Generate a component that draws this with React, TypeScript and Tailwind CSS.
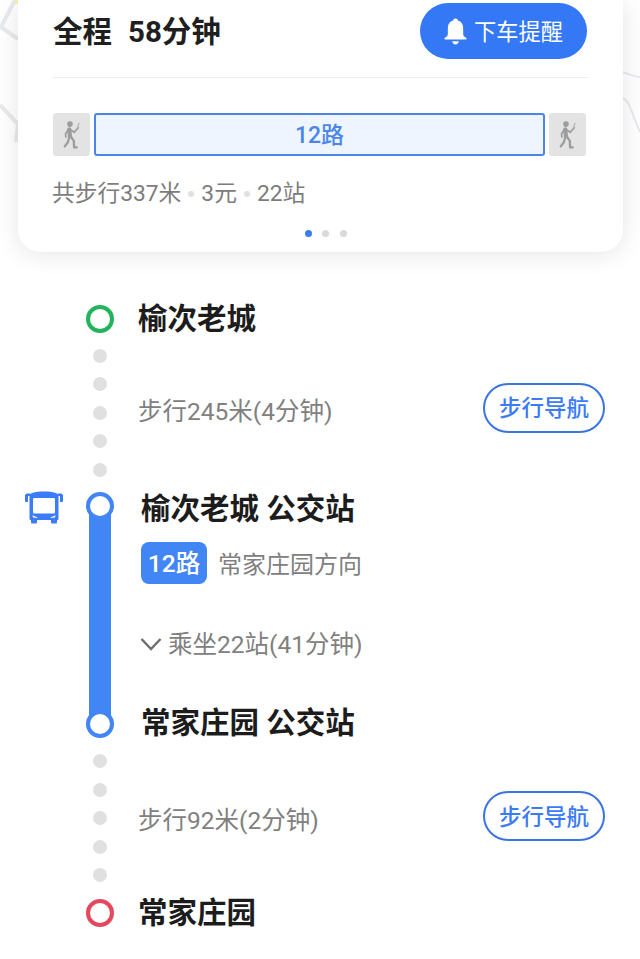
import React from 'react';

const Walker = () => (
  <svg viewBox="0 0 16 27" className="w-[17px] h-[28px]" fill="none" stroke="#9c9c9c" strokeLinecap="round" strokeLinejoin="round">
    <circle cx="6.500" cy="3" r="2.700" fill="#9c9c9c" stroke="none" />
    <path d="M5.800 8 L6.500 15" strokeWidth="4" />
    <path d="M7 8 L10.500 11 L14.500 6.500" strokeWidth="1.600" />
    <path d="M5 8 L2.200 12.500 L2.500 15.500" strokeWidth="1.600" />
    <path d="M6 15 L4.500 20.500 L1.500 24.500" strokeWidth="2.200" />
    <path d="M7.500 15 L10.300 19.500 L10.500 25.500 L13 25.500" strokeWidth="2.200" />
    <path d="M14 5.500 L15.300 2" strokeWidth="0.800" />
  </svg>
);

const Bell = () => (
  <svg viewBox="0 0 24 28" className="w-[23px] h-[27px]" fill="#fff">
    <path d="M12 .5 c1.500 0 2.400 1 2.500 2.100 c3.700 1 5.500 4.100 5.500 7.900 v6 c0 1.800 1.200 3 3 3.900 c1 .5 .8 1.900 -.4 1.900 H1.400 c-1.200 0 -1.400 -1.400 -.4 -1.900 c1.800 -.9 3 -2.100 3 -3.900 v-6 c0 -3.800 1.800 -6.900 5.500 -7.900 c.1 -1.100 1 -2.100 2.500 -2.100 Z" />
    <path d="M8.500 24.200 h7 c-.3 1.900 -1.700 3.300 -3.500 3.300 s-3.200 -1.400 -3.500 -3.300 Z" />
  </svg>
);

const BusIcon = () => (
  <svg viewBox="0 0 38 33" className="w-[38px] h-[33px]" fill="#3b7bf6">
    <path fillRule="evenodd" d="M4.500 5 C4.500 2 9 .5 19 .5 C29 .5 33.500 2 33.500 5 V27.500 C33.500 28.500 33 29 32 29 V31 C32 32 31.500 32.500 30.500 32.500 H27.500 C26.500 32.500 26 32 26 31 V29 H12 V31 C12 32 11.500 32.500 10.500 32.500 H7.500 C6.500 32.500 6 32 6 31 V29 C5 29 4.500 28.500 4.500 27.500 Z M8 8.500 V21 C8 22 8.500 22.500 9.500 22.500 H28.500 C29.500 22.500 30 22 30 21 V8.500 C30 7.500 29.500 7 28.500 7 H9.500 C8.500 7 8 7.500 8 8.500 Z" />
    <path d="M7.500 24.200 L12.500 26.400 L12.500 27 L8 26.400 Z M30.500 24.200 L25.500 26.400 L25.500 27 L30 26.400 Z" fill="#fff" />
    <path d="M0 4.500 C0 3 1.500 2.500 3 2.500 H5 V5 H3 V11 H1.500 C.5 11 0 10.500 0 10 Z M38 4.500 C38 3 36.500 2.500 35 2.500 H33 V5 H35 V11 H36.500 C37.500 11 38 10.500 38 10 Z" />
  </svg>
);

const Chevron = () => (
  <svg viewBox="0 0 22 14" className="w-[22px] h-[14px]" fill="none" stroke="#6f6f6f" strokeWidth="2.500">
    <path d="M1.500 2 L11 12 L20.500 2" />
  </svg>
);

const WalkRow = ({ label, height, offset, dotsOffset }: { label: string; height: string; offset: string; dotsOffset: string }) => (
  <div className={`flex items-center pl-[72px] pr-[35px] ${height}`}>
    <div className={`w-[56px] shrink-0 flex flex-col items-center gap-[14.500px] ${dotsOffset}`}>
      {[0, 1, 2, 3, 4].map((i) => (
        <span key={i} className="w-[14px] h-[14px] rounded-full bg-[#e0e0e0]" />
      ))}
    </div>
    <div className={`flex-1 flex items-center justify-between ml-[10px] ${offset}`}>
      <span className="text-[24.500px] text-[#808080]">{label}</span>
      <button className="w-[122px] h-[50px] -mt-[10px] pt-[3px] rounded-full border-2 border-[#3b73e0] text-[#3b7bf6] text-[22.500px] font-medium">
        步行导航
      </button>
    </div>
  </div>
);

const Stop = ({ color, name }: { color: string; name: string }) => (
  <div className="flex items-center h-[30px] pl-[72px]">
    <div className="w-[56px] shrink-0 flex justify-center">
      <span className={`w-[28px] h-[28px] rounded-full border-[4px] ${color}`} />
    </div>
    <span className="ml-[10px] text-[29.500px] font-bold text-[#1c1c1c]">{name}</span>
  </div>
);

const App: React.FC = () => {
  return (
    <div className={'relative w-[640px] h-[959px] bg-white overflow-hidden font-["Roboto","Noto_Sans_CJK_SC",sans-serif]'}>
      {/* 露出的地图 */}
      <svg className="absolute left-0 top-0" width="640" height="150" fill="none" stroke="#e8eaee" strokeWidth="4">
        <path d="M15 0 L1 27 L18 39" />
        <path d="M0 105 L18 124 L16 142" />
        <path d="M15 0 L19 0" stroke="#fbeeb0" strokeWidth="8" />
        <path d="M622 72 C630 74 634 77 640 77 M622 98 C630 100 632 115 640 132" strokeWidth="2" />
      </svg>

      {/* 方案卡片 */}
      <div className="relative ml-[18px] w-[605px] h-[252px] bg-white rounded-b-[22px] shadow-[0_2px_24px_rgba(0,0,0,0.11)] px-[35px] pt-[3px]">
        <div className="flex items-center justify-between h-[56px] pr-[1px]">
          <span className="flex gap-[16px] pt-[3px] text-[29.500px] font-bold text-[#1f1f1f]">
            <span>全程</span>
            <span>58分钟</span>
          </span>
          <button className="w-[167px] h-[56px] rounded-full bg-[#3478f6] flex items-center justify-center gap-[7px] text-white text-[22.250px]">
            <Bell />
            <span className="pt-[3px]">下车提醒</span>
          </button>
        </div>
        <div className="mt-[18px] h-[1px] bg-[#ececec]" />
        <div className="mt-[35px] flex gap-[4px] h-[43px] pr-[2px]">
          <div className="w-[37px] rounded-[3px] bg-[#e3e3e3] flex items-center justify-center">
            <Walker />
          </div>
          <div className="flex-1 rounded-[3px] border-2 border-[#4a86e8] bg-[#eef5fe] flex items-center justify-center pt-[3px] text-[#4a86e8] text-[23px] font-medium">
            12路
          </div>
          <div className="w-[37px] rounded-[3px] bg-[#e3e3e3] flex items-center justify-center">
            <Walker />
          </div>
        </div>
        <div className="mt-[21px] flex items-center text-[22.750px] text-[#7c7c7c] -ml-[1px] h-[34px]">
          共步行337米
          <span className="mx-[7px] w-[6px] h-[6px] rounded-full bg-[#e0e0e0]" />
          3元
          <span className="mx-[7px] w-[6px] h-[6px] rounded-full bg-[#e0e0e0]" />
          22站
        </div>
        <div className="mt-[19px] flex justify-center gap-[10.500px] pl-[10px]">
          <span className="w-[7px] h-[7px] rounded-full bg-[#3b7bf6]" />
          <span className="w-[7px] h-[7px] rounded-full bg-[#d9d9d9]" />
          <span className="w-[7px] h-[7px] rounded-full bg-[#d9d9d9]" />
        </div>
      </div>

      {/* 路线 */}
      <div className="pt-[52px]">
        <Stop color="border-[#22b45a]" name="榆次老城" />
        <WalkRow label="步行245米(4分钟)" height="h-[159px]" offset="pb-[2px]" dotsOffset="pb-[2px]" />

        <div className="flex h-[245px]">
          <div className="w-[72px] shrink-0 pl-[25px] -mt-[2px]">
            <BusIcon />
          </div>
          <div className="relative w-[56px] shrink-0 flex flex-col items-center justify-between -mt-[1px]">
            <span className="absolute top-[14px] bottom-[14px] w-[22px] bg-[#4285f4]" />
            <span className="relative w-[28px] h-[28px] rounded-full border-[4px] border-[#4285f4] bg-white" />
            <span className="relative w-[28px] h-[28px] rounded-full border-[4px] border-[#4285f4] bg-white" />
          </div>
          <div className="ml-[13px] pt-[1px]">
            <div className="h-[30px] flex items-center text-[29.500px] font-bold text-[#1c1c1c]">榆次老城 公交站</div>
            <div className="mt-[18px] flex items-center">
              <span className="w-[66px] h-[42px] pt-[3px] rounded-[8px] bg-[#4285f4] flex items-center justify-center text-white text-[24.500px] font-medium">
                12路
              </span>
              <span className="ml-[11px] pt-[3px] text-[24px] text-[#808080]">常家庄园方向</span>
            </div>
            <div className="mt-[43px] h-[34px] flex items-center gap-[6px] -ml-[1px] text-[24.500px] text-[#808080]">
              <Chevron />
              <span className="pt-[3px]">乘坐22站(41分钟)</span>
            </div>
            <div className="mt-[47px] h-[30px] flex items-center text-[29.500px] font-bold text-[#1c1c1c]">常家庄园 公交站</div>
          </div>
        </div>

        <WalkRow label="步行92米(2分钟)" height="h-[160px]" offset="pt-[6px]" dotsOffset="" />
        <Stop color="border-[#e5475c]" name="常家庄园" />
      </div>
    </div>
  );
};

export default App;
